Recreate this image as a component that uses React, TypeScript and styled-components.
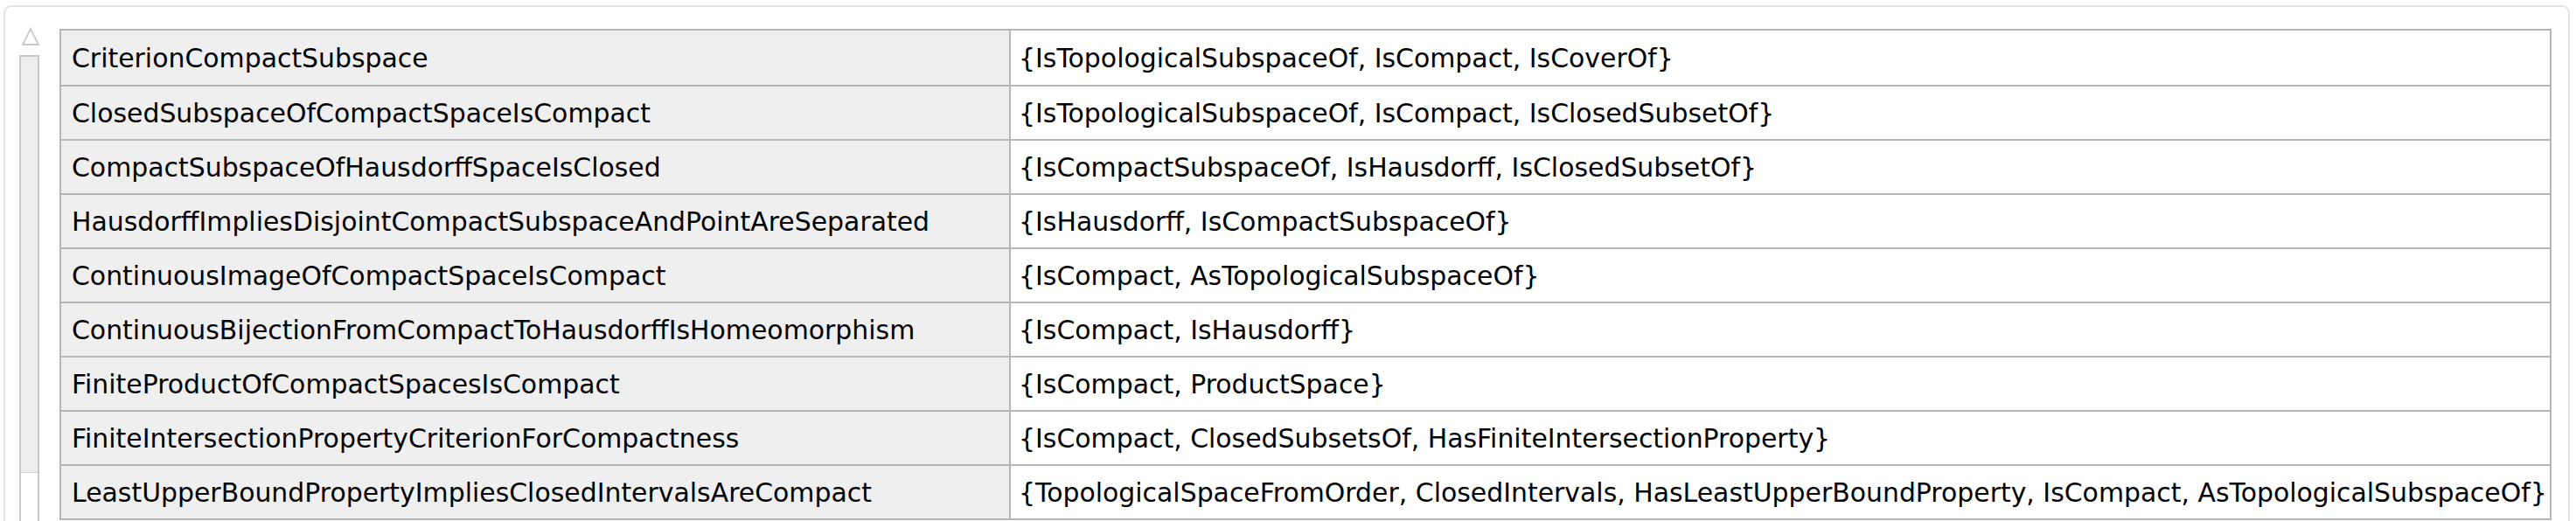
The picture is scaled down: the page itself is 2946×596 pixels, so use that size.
import React from "react";
import styled, { createGlobalStyle } from "styled-components";

const GlobalStyle = createGlobalStyle`
  html, body {
    margin: 0;
    padding: 0;
    background: #ffffff;
    overflow: hidden;
  }
`;

const Page = styled.div`
  width: 2946px;
  height: 596px;
  padding: 6px 0 0 4px;
  box-sizing: border-box;
  overflow: hidden;
`;

const Frame = styled.div`
  width: 2935px;
  height: 620px;
  box-sizing: border-box;
  border: 2px solid #e4e4e4;
  border-bottom: none;
  border-radius: 9px 9px 0 0;
  display: flex;
  align-items: flex-start;
`;

const ScrollColumn = styled.div`
  width: 24px;
  margin-left: 16px;
  padding-top: 23px;
  height: 100%;
  box-sizing: border-box;
  display: flex;
  flex-direction: column;
`;

const ArrowUp = styled.svg`
  display: block;
  width: 24px;
  height: 22px;
  flex: none;
`;

const Track = styled.div`
  margin-top: 10px;
  flex: 1;
  width: 23px;
  box-sizing: border-box;
  border: 2px solid #c9c9c9;
  border-bottom: none;
  display: flex;
  flex-direction: column;
`;

const Thumb = styled.div`
  height: 475px;
  background: #eeeeee;
  border-bottom: 1px solid #cfcfcf;
`;

const Table = styled.div`
  margin-left: 22px;
  margin-top: 25px;
  width: 2850px;
  box-sizing: border-box;
  border: 2px solid #b5b5b5;
  background: #b5b5b5;
  display: grid;
  grid-template-columns: 1084px 1fr;
  grid-template-rows: 62px;
  grid-auto-rows: 60px;
  gap: 2px;
`;

const Cell = styled.div<{ $head?: boolean }>`
  display: flex;
  align-items: center;
  padding-left: ${(p) => (p.$head ? "12px" : "9px")};
  background: ${(p) => (p.$head ? "#efefef" : "#ffffff")};
  font-family: "DejaVu Sans", Verdana, sans-serif;
  font-size: 29.9px;
  color: #000000;
  white-space: nowrap;
  overflow: hidden;
`;

const rows: [string, string[]][] = [
  ["CriterionCompactSubspace", ["IsTopologicalSubspaceOf", "IsCompact", "IsCoverOf"]],
  ["ClosedSubspaceOfCompactSpaceIsCompact", ["IsTopologicalSubspaceOf", "IsCompact", "IsClosedSubsetOf"]],
  ["CompactSubspaceOfHausdorffSpaceIsClosed", ["IsCompactSubspaceOf", "IsHausdorff", "IsClosedSubsetOf"]],
  ["HausdorffImpliesDisjointCompactSubspaceAndPointAreSeparated", ["IsHausdorff", "IsCompactSubspaceOf"]],
  ["ContinuousImageOfCompactSpaceIsCompact", ["IsCompact", "AsTopologicalSubspaceOf"]],
  ["ContinuousBijectionFromCompactToHausdorffIsHomeomorphism", ["IsCompact", "IsHausdorff"]],
  ["FiniteProductOfCompactSpacesIsCompact", ["IsCompact", "ProductSpace"]],
  ["FiniteIntersectionPropertyCriterionForCompactness", ["IsCompact", "ClosedSubsetsOf", "HasFiniteIntersectionProperty"]],
  [
    "LeastUpperBoundPropertyImpliesClosedIntervalsAreCompact",
    ["TopologicalSpaceFromOrder", "ClosedIntervals", "HasLeastUpperBoundProperty", "IsCompact", "AsTopologicalSubspaceOf"],
  ],
];

export default function App() {
  return (
    <>
      <GlobalStyle />
      <Page>
        <Frame>
          <ScrollColumn>
            <ArrowUp viewBox="0 0 24 22">
              <path d="M13 2 L4 20 L22 20 Z" fill="none" stroke="#cacaca" strokeWidth="1.8" strokeLinejoin="miter" />
            </ArrowUp>
            <Track>
              <Thumb />
            </Track>
          </ScrollColumn>
          <Table>
            {rows.map(([name, deps]) => (
              <React.Fragment key={name}>
                <Cell $head>{name}</Cell>
                <Cell>{"{" + deps.join(", ") + "}"}</Cell>
              </React.Fragment>
            ))}
          </Table>
        </Frame>
      </Page>
    </>
  );
}
